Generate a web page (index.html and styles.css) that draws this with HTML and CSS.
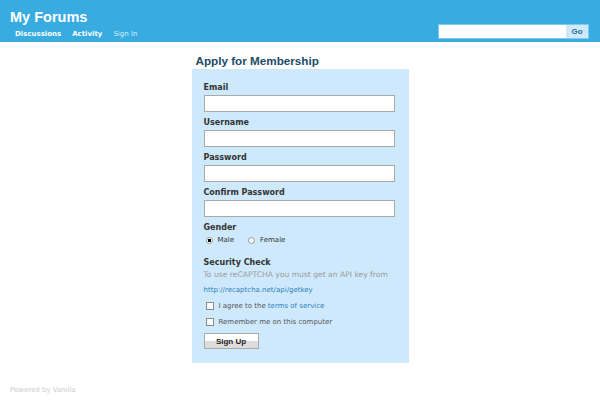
FILE: index.html
```html
<!DOCTYPE html>
<html lang="en">

<head>
  <meta charset="UTF-8" />
  <title>Apply for Membership - My Forums</title>
  <link rel="stylesheet" href="styles.css">
</head>

<body>

  <div class="hlavicka">
    <div class="hlavicka-lavo">
      <div class="nazov">My Forums</div>
      <div class="menu">
        <a href="#" class="menu-polozka">Discussions</a>
        <a href="#" class="menu-polozka">Activity</a>
        <a href="#" class="menu-polozka prihlasenie">Sign In</a>
      </div>
    </div>
    <form class="hladanie">
      <input type="text" class="hladanie-pole">
      <button type="button" class="hladanie-tlacidlo">Go</button>
    </form>
  </div>

  <div class="obsah">
    <h1 class="nadpis">Apply for Membership</h1>
    <div class="formular">
      <label class="popisok">Email</label>
      <input type="text" class="pole">

      <label class="popisok">Username</label>
      <input type="text" class="pole">

      <label class="popisok">Password</label>
      <input type="password" class="pole">

      <label class="popisok">Confirm Password</label>
      <input type="password" class="pole">

      <label class="popisok">Gender</label>
      <div class="pohlavie">
        <label class="volba"><input type="radio" name="pohlavie" checked> Male</label>
        <label class="volba"><input type="radio" name="pohlavie"> Female</label>
      </div>

      <div class="popisok kontrola">Security Check</div>
      <p class="poznamka">To use reCAPTCHA you must get an API key from<br>
        <a href="#" class="odkaz">http://recaptcha.net/api/getkey</a></p>

      <label class="zaskrtnutie"><input type="checkbox"> I agree to the <a href="#" class="odkaz">terms of service</a></label>
      <label class="zaskrtnutie"><input type="checkbox"> Remember me on this computer</label>

      <button type="button" class="registracia">Sign Up</button>
    </div>
  </div>

  <div class="pata">Powered by Vanilla</div>

</body>

</html>
```

FILE: styles.css
```css
body {
  font-family: "DejaVu Sans", Verdana, sans-serif;
  background-color: #fff;
  margin: 0;
  padding: 0;
  color: #333;
}

.hlavicka {
  background-color: #38abe1;
  height: 42px;
  display: flex;
  justify-content: space-between;
  align-items: flex-end;
  padding: 0 11px 0 10px;
  box-sizing: border-box;
}

.hlavicka-lavo {
  align-self: stretch;
}

.nazov {
  font-family: "Liberation Sans", Arial, sans-serif;
  font-weight: bold;
  font-size: 14.5px;
  color: #fff;
  padding-top: 8px;
  line-height: 18px;
}

.menu {
  display: flex;
  gap: 11px;
  padding: 4px 0 0 5px;
}

.menu-polozka {
  font-size: 7px;
  font-weight: bold;
  color: #fff;
  text-decoration: none;
}

.prihlasenie {
  font-weight: normal;
  color: #d6effc;
}

.hladanie {
  display: flex;
  margin: 0 0 3px;
}

.hladanie-pole {
  width: 128px;
  height: 15px;
  box-sizing: border-box;
  border: 1px solid #7ccaf0;
  border-right: none;
  padding: 0;
  margin: 0;
}

.hladanie-tlacidlo {
  width: 23px;
  height: 15px;
  padding: 0;
  margin: 0;
  border: 1px solid #7ccaf0;
  border-left: none;
  background: #cfe9fb;
  color: #2d6b96;
  font-family: "Liberation Sans", Arial, sans-serif;
  font-weight: bold;
  font-size: 8px;
}

.obsah {
  width: 217px;
  margin: 0 auto;
  padding-top: 12px;
}

.nadpis {
  font-family: "Liberation Sans", Arial, sans-serif;
  font-size: 11.7px;
  color: #1b4b68;
  margin: 0 0 1px 4px;
  line-height: 14px;
}

.formular {
  background-color: #cfe9fc;
  padding: 14px 14px 14px 12px;
  display: flex;
  flex-direction: column;
  align-items: flex-start;
}

.popisok {
  font-size: 8px;
  font-weight: bold;
  color: #333;
  line-height: 9px;
  margin-bottom: 3px;
}

.pole {
  width: 191px;
  height: 17px;
  box-sizing: border-box;
  border: 1px solid #a9a9a9;
  background: #fff;
  margin: 0 0 6px;
  padding: 0;
}

.pohlavie {
  display: flex;
  gap: 14px;
  padding-left: 2px;
  margin-bottom: 13px;
  height: 10px;
}

.volba {
  font-size: 7px;
  color: #333;
  display: flex;
  align-items: center;
  gap: 5px;
}

.volba input {
  appearance: none;
  margin: 0;
  width: 7px;
  height: 7px;
  border: 1px solid #999;
  border-radius: 50%;
  background: #fff;
  box-sizing: border-box;
}

.volba input:checked {
  background: radial-gradient(circle, #000 1.5px, #fff 2px);
}

.kontrola {
  margin-bottom: 0;
}

.poznamka {
  font-size: 7.6px;
  color: #999;
  line-height: 15px;
  margin: 0;
}

.odkaz {
  color: #2b7fb8;
  text-decoration: none;
}

.poznamka .odkaz {
  font-size: 7px;
}

.zaskrtnutie {
  font-size: 7px;
  color: #555;
  display: flex;
  align-items: center;
  gap: 5px;
  height: 16px;
  padding-left: 2px;
}

.zaskrtnutie input {
  appearance: none;
  margin: 0;
  width: 8px;
  height: 8px;
  border: 1px solid #888;
  background: #fff;
  box-sizing: border-box;
}

.zaskrtnutie .odkaz {
  margin-left: -3px;
}

.registracia {
  margin-top: 3px;
  width: 55px;
  height: 16px;
  font-family: "Liberation Sans", Arial, sans-serif;
  font-size: 8px;
  font-weight: bold;
  color: #222;
  background: linear-gradient(#fff 50%, #ddd 50%);
  border: 1px solid #aaa;
  padding: 0;
}

.pata {
  font-size: 7px;
  color: #ccc;
  padding: 23px 0 0 10px;
}
```
